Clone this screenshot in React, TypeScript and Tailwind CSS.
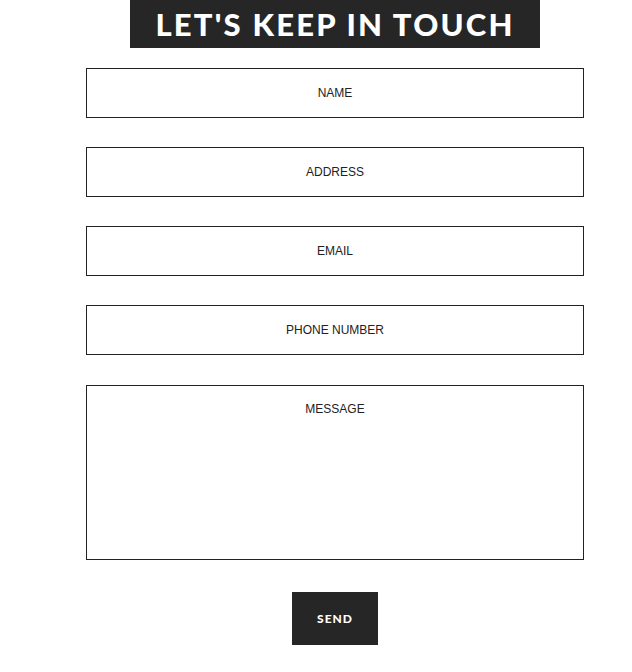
import React from "react"

const fields = ["NAME", "ADDRESS", "EMAIL", "PHONE NUMBER"]

export default function App() {
    return (
        <div className="min-h-[672px] bg-white pl-[38px] flex flex-col items-center font-['Liberation_Sans',Arial,sans-serif]">
            <h1 className="w-[410px] h-[48px] bg-[#262626] text-white flex items-center justify-center font-['Lato',sans-serif] font-black text-[31px] tracking-[2.2px] leading-none">
                LET'S KEEP IN TOUCH
            </h1>
            <form className="w-[498px] mt-[20px] flex flex-col gap-[29px]">
                {fields.map((f) => (
                    <input
                        key={f}
                        placeholder={f}
                        className="h-[50px] w-full border border-[#222] text-center text-[12px] text-[#222] placeholder:text-[#222] outline-none"
                    />
                ))}
                <textarea
                    placeholder="MESSAGE"
                    className="mt-[1px] h-[175px] w-full border border-[#222] text-center text-[12px] text-[#222] placeholder:text-[#222] pt-[14px] resize-none outline-none"
                />
                <div className="flex justify-center mt-[3px]">
                    <button
                        type="button"
                        className="w-[86px] h-[53px] bg-[#262626] text-white text-[12px] font-black tracking-[1px] font-['Lato',sans-serif]"
                    >
                        SEND
                    </button>
                </div>
            </form>
        </div>
    )
}
